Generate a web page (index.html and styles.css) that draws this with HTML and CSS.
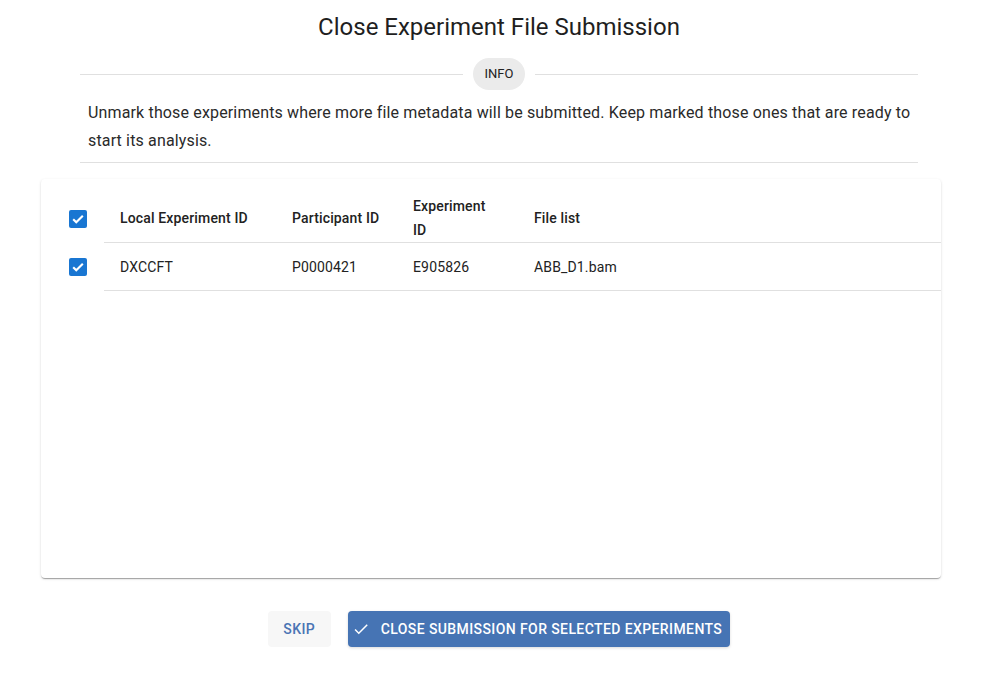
FILE: index.html
```html
<!DOCTYPE html>
<html lang="en">
<head>
<meta charset="utf-8">
<title>Close Experiment File Submission</title>
<link rel="stylesheet" href="styles.css">
</head>
<body>
<div class="page">
  <h1 class="title">Close Experiment File Submission</h1>
  <div class="info">
    <div class="divider"><span class="line"></span><span class="chip">INFO</span><span class="line"></span></div>
    <p class="text">Unmark those experiments where more file metadata will be submitted. Keep marked those ones that are ready to start its analysis.</p>
  </div>
  <div class="card">
    <div class="table">
      <div class="row head">
        <div class="check"><span class="box"><svg viewBox="0 0 24 24"><path d="M4.8 12.4l4.6 4.6 9.8-9.8" fill="none" stroke="#fff" stroke-width="3.2"/></svg></span></div>
        <div class="cells">
          <div class="cell c1">Local Experiment ID</div>
          <div class="cell c2">Participant ID</div>
          <div class="cell c3">Experiment ID</div>
          <div class="cell c4">File list</div>
        </div>
      </div>
      <div class="row body">
        <div class="check"><span class="box"><svg viewBox="0 0 24 24"><path d="M4.8 12.4l4.6 4.6 9.8-9.8" fill="none" stroke="#fff" stroke-width="3.2"/></svg></span></div>
        <div class="cells">
          <div class="cell c1">DXCCFT</div>
          <div class="cell c2">P0000421</div>
          <div class="cell c3">E905826</div>
          <div class="cell c4">ABB_D1.bam</div>
        </div>
      </div>
    </div>
  </div>
  <div class="actions">
    <button class="btn skip">SKIP</button>
    <button class="btn primary"><svg class="ico" viewBox="0 0 24 24"><path d="M9 16.17 4.83 12l-1.42 1.41L9 19 21 7l-1.41-1.41z" fill="#fff"/></svg>CLOSE SUBMISSION FOR SELECTED EXPERIMENTS</button>
  </div>
</div>
</body>
</html>
```

FILE: styles.css
```css
* { box-sizing: border-box; }
html, body { margin: 0; padding: 0; background: #fff; }
body { font-family: Roboto, "Liberation Sans", Arial, sans-serif; color: #222; width: 992px; height: 679px; overflow: hidden; }
.page { display: flex; flex-direction: column; align-items: center; padding-top: 11px; padding-left: 6px; }
.title { margin: 0; font-size: 24px; font-weight: 400; line-height: 32px; color: #1f1f1f; letter-spacing: 0; }
.info { width: 838px; margin-top: 15px; border-bottom: 1px solid #e0e0e0; }
.divider { display: flex; align-items: center; gap: 10px; height: 32px; }
.line { flex: 1; height: 1px; background: #e0e0e0; }
.chip { height: 32px; width: 52px; border-radius: 16px; background: #ebebeb; font-size: 13px; line-height: 32px; text-align: center; color: #222; }
.text { margin: 9px 0 0; padding: 0 2px 7px 8px; font-size: 16px; line-height: 28px; letter-spacing: 0.15px; color: #2a2a2a; }
.card { align-self: flex-start; margin-left: 35px; width: 900px; height: 399px; margin-top: 16px; padding-top: 8px; background: #fff; border-radius: 4px; box-shadow: 0 2px 1px -1px rgba(0,0,0,0.2), 0 1px 1px 0 rgba(0,0,0,0.14), 0 1px 3px 0 rgba(0,0,0,0.12); }
.table { display: flex; flex-direction: column; }
.row { display: flex; align-items: center; }
.check { width: 63px; display: flex; justify-content: flex-start; padding-left: 28px; }
.head .check { padding-top: 8px; }
.box { width: 18px; height: 18px; border-radius: 2px; background: #1976d2; display: flex; align-items: center; justify-content: center; }
.box svg { width: 16px; height: 16px; }
.cells { flex: 1; display: flex; border-bottom: 1px solid #e0e0e0; align-self: stretch; }
.cell { padding: 0 16px; font-size: 14px; line-height: 24px; letter-spacing: 0.15px; display: flex; align-items: center; }
.head .cell { font-weight: 500; padding-top: 7px; padding-bottom: 0; color: #222; }
.body .cell { padding-top: 11.5px; padding-bottom: 11.5px; color: #222; }
.c1 { width: 172px; }
.c2 { width: 121px; }
.c3 { width: 121px; }
.c4 { flex: 1; }
.actions { display: flex; gap: 17px; margin-top: 33px; }
.btn { font-family: Roboto, "Liberation Sans", Arial, sans-serif; font-size: 14px; font-weight: 500; letter-spacing: 0.4px; height: 36px; border: none; border-radius: 4px; display: flex; align-items: center; white-space: nowrap; cursor: pointer; }
.skip { background: #f7f7f7; color: #4a74b4; width: 63px; justify-content: center; padding: 0; }
.primary { background: #4674b4; color: #fff; padding: 0 8px 0 4px; box-shadow: 0 1px 3px rgba(0,0,0,0.15); }
.ico { width: 18px; height: 18px; margin: 0 11px 0 0; }
```
